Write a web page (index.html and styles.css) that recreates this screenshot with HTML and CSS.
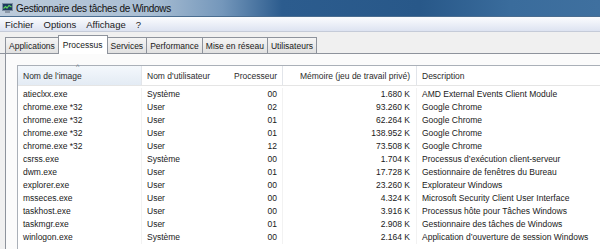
FILE: index.html
```html
<!DOCTYPE html>
<html lang="fr">
<head>
    <meta charset="UTF-8">
    <title>Gestionnaire des tâches de Windows</title>
    <link rel="stylesheet" href="styles.css">
</head>
<body>
    <div class="window">
        <div class="titlebar">
            <svg class="app-icon" width="11" height="10" viewBox="0 0 11 10">
                <rect x="0.5" y="0.5" width="10" height="7" fill="#1d3b5e" stroke="#7d8ea3"/>
                <polyline points="1.5,5.5 3.5,3.5 5,5 7,2.5 9.5,4" fill="none" stroke="#5fd35a" stroke-width="1.2"/>
                <rect x="3" y="8" width="5" height="2" fill="#8b98a8"/>
            </svg>
            <span class="title">Gestionnaire des tâches de Windows</span>
        </div>

        <div class="menubar">
            <span>Fichier</span>
            <span>Options</span>
            <span>Affichage</span>
            <span>?</span>
        </div>

        <div class="tabstrip">
            <div class="tab">Applications</div>
            <div class="tab active">Processus</div>
            <div class="tab">Services</div>
            <div class="tab">Performance</div>
            <div class="tab">Mise en réseau</div>
            <div class="tab">Utilisateurs</div>
        </div>

        <div class="panel">
            <div class="listview">
                <div class="header">
                    <div class="col c-name sorted">Nom de l'image<span class="sort-arrow">^</span></div>
                    <div class="col c-user">Nom d'utilisateur</div>
                    <div class="col c-cpu num">Processeur</div>
                    <div class="col c-mem num">Mémoire (jeu de travail privé)</div>
                    <div class="col c-desc">Description</div>
                </div>
                <div id="rows" class="rows"></div>
            </div>
        </div>
    </div>

    <script>
        const processes = [
            ['atieclxx.exe', 'Système', '00', '1.680 K', 'AMD External Events Client Module'],
            ['chrome.exe *32', 'User', '02', '93.260 K', 'Google Chrome'],
            ['chrome.exe *32', 'User', '01', '62.264 K', 'Google Chrome'],
            ['chrome.exe *32', 'User', '01', '138.952 K', 'Google Chrome'],
            ['chrome.exe *32', 'User', '12', '73.508 K', 'Google Chrome'],
            ['csrss.exe', 'Système', '00', '1.704 K', 'Processus d’exécution client-serveur'],
            ['dwm.exe', 'User', '01', '17.728 K', 'Gestionnaire de fenêtres du Bureau'],
            ['explorer.exe', 'User', '00', '23.260 K', 'Explorateur Windows'],
            ['msseces.exe', 'User', '00', '4.324 K', 'Microsoft Security Client User Interface'],
            ['taskhost.exe', 'User', '00', '3.916 K', 'Processus hôte pour Tâches Windows'],
            ['taskmgr.exe', 'User', '01', '2.908 K', 'Gestionnaire des tâches de Windows'],
            ['winlogon.exe', 'Système', '00', '2.164 K', 'Application d’ouverture de session Windows']
        ];

        const rows = document.getElementById('rows');
        const classes = ['c-name', 'c-user', 'c-cpu num', 'c-mem num', 'c-desc'];

        processes.forEach(proc => {
            const row = document.createElement('div');
            row.className = 'row';
            proc.forEach((value, i) => {
                const cell = document.createElement('div');
                cell.className = 'col ' + classes[i];
                cell.textContent = value;
                row.appendChild(cell);
            });
            rows.appendChild(row);
        });
    </script>
</body>
</html>
```

FILE: styles.css
```css
body {
    margin: 0;
    font-family: "Liberation Sans", Arial, sans-serif;
    font-size: 8.5px;
    color: #1a1a1a;
    background: #f0f0f0;
    overflow: hidden;
}
.window {
    width: 600px;
    height: 249px;
    display: flex;
    flex-direction: column;
}
.titlebar {
    height: 16px;
    display: flex;
    align-items: center;
    gap: 3px;
    padding-left: 2px;
    background: linear-gradient(90deg, #bccbdb 0%, #a9bed3 25%, #7497bb 37%, #2c5c8e 47%, #285889 70%, #3a6c9c 85%, #3f709f 100%);
    border-bottom: 1px solid #4a6d90;
}
.title {
    font-size: 10px;
    letter-spacing: -0.3px;
    color: #111;
}
.menubar {
    height: 14px;
    display: flex;
    align-items: center;
    gap: 10px;
    padding-left: 5px;
    background: linear-gradient(#fbfcfe, #dde3f1);
    border-bottom: 1px solid #c5cbd8;
    font-size: 9.5px;
}
.tabstrip {
    height: 19px;
    margin-top: 2px;
    display: flex;
    align-items: flex-end;
    padding-left: 5px;
    border-bottom: 1px solid #8e939c;
}
.tab {
    height: 15px;
    padding: 0 3px;
    display: flex;
    align-items: center;
    font-size: 8.5px;
    background: linear-gradient(#f5f5f5, #e1e1e1);
    border: 1px solid #8e939c;
    border-bottom: none;
    margin-right: -1px;
}
.tab.active {
    height: 18px;
    background: #fff;
    margin-bottom: -1px;
    padding: 0 4px;
    position: relative;
    z-index: 1;
}
.panel {
    flex: 1;
    background: #fbfbfb;
    border-left: 1px solid #8e939c;
    margin-left: 5px;
    padding: 11px 0 0 11px;
}
.listview {
    height: 100%;
    background: #fff;
    border-left: 1px solid #aab0b8;
    border-top: 1px solid #aab0b8;
    position: relative;
}
.header, .row {
    display: flex;
}
.header {
    height: 19px;
    align-items: center;
    border-bottom: 1px solid #e5e5e5;
    margin-bottom: 2px;
}
.row {
    height: 13px;
    align-items: center;
}
.col {
    box-sizing: border-box;
    white-space: nowrap;
    padding: 0 5px;
}
.header .col {
    height: 100%;
    display: flex;
    align-items: center;
    color: #2b2b2b;
}
.num {
    justify-content: flex-end;
    text-align: right;
}
.c-name {
    width: 124px;
    border-right: 1px solid #e2e5ea;
    position: relative;
}
.c-user {
    width: 84px;
}
.c-cpu {
    width: 57px;
    border-right: 1px solid #e2e5ea;
}
.c-mem {
    width: 134px;
    padding-right: 6px;
    border-right: 1px solid #e2e5ea;
}
.c-desc {
    flex: 1;
}
.row .col {
    height: 100%;
    line-height: 13px;
    border-right-color: #f2f2f2;
}
.header .sorted {
    background: linear-gradient(#f4f8fc, #e3ebf4);
}
.sort-arrow {
    position: absolute;
    left: 58px;
    top: -3px;
    font-size: 7px;
    color: #6a7888;
}
```
